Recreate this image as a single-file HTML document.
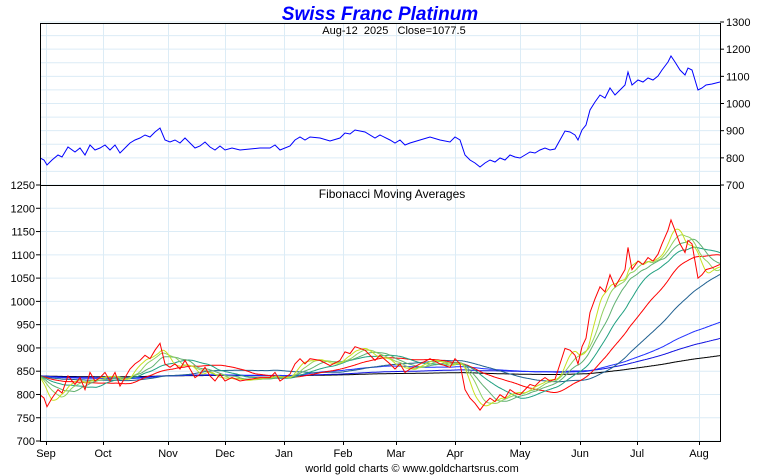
<!DOCTYPE html>
<html><head><meta charset="utf-8"><style>
html,body{margin:0;padding:0;background:#fff;width:760px;height:475px;overflow:hidden}
text{font-family:"Liberation Sans",sans-serif}
</style></head><body>
<svg id="s" width="760" height="475" xmlns="http://www.w3.org/2000/svg">
<defs>
<clipPath id="ct"><rect x="40" y="23" width="680" height="162"/></clipPath>
<clipPath id="cb"><rect x="40" y="185" width="680" height="257"/></clipPath>
</defs>
<g id="grid" stroke="#dcecf6" stroke-width="1"></g>
<g id="lines"></g>
<rect x="40.5" y="23.5" width="680" height="418" fill="none" stroke="#000"/>
<line x1="40" y1="185.5" x2="720" y2="185.5" stroke="#000"/>
<g id="labels" font-size="11" fill="#000"></g>
<text x="380" y="20" text-anchor="middle" font-size="19" font-weight="bold" font-style="italic" fill="#0000ff">Swiss Franc Platinum</text>
<text x="394" y="34" text-anchor="middle" font-size="11" style="white-space:pre" xml:space="preserve">Aug-12  2025   Close=1077.5</text>
<text x="392" y="198" text-anchor="middle" font-size="12">Fibonacci Moving Averages</text>
<text x="412" y="472" text-anchor="middle" font-size="11">world gold charts © www.goldchartsrus.com</text>
</svg>
<script>
var NS="http://www.w3.org/2000/svg";
function el(p,t,a,txt){var e=document.createElementNS(NS,t);for(var k in a)e.setAttribute(k,a[k]);if(txt)e.textContent=txt;p.appendChild(e);return e;}
var g=document.getElementById('grid'),L=document.getElementById('labels'),ln=document.getElementById('lines');
var months=[[46,'Sep'],[103,'Oct'],[168,'Nov'],[225,'Dec'],[284,'Jan'],[343,'Feb'],[396,'Mar'],[455,'Apr'],[520,'May'],[580,'Jun'],[637,'Jul'],[699,'Aug']];
months.forEach(function(m){el(g,'line',{x1:m[0]+.5,y1:23,x2:m[0]+.5,y2:441});el(L,'line',{x1:m[0]+.5,y1:441,x2:m[0]+.5,y2:445,stroke:'#000'});el(L,'text',{x:m[0],y:457,'text-anchor':'middle'},m[1]);});
for(var p=700;p<=1300;p+=50){var y=22+(1300-p)*0.2717;el(g,'line',{x1:40,y1:y,x2:720,y2:y});}
for(var p=700;p<=1300;p+=100){var y=22+(1300-p)*0.2717;el(L,'line',{x1:720,y1:y,x2:724,y2:y,stroke:'#000'});el(L,'text',{x:726,y:y+4},p);}
for(var p=700;p<=1250;p+=50){var y=185+(1250-p)*0.4655;el(g,'line',{x1:40,y1:y,x2:720,y2:y});el(L,'line',{x1:36,y1:y,x2:40,y2:y,stroke:'#000'});el(L,'text',{x:35,y:y+4,'text-anchor':'end'},p);}
var pts=[[40,158],[44,160],[47,165],[52,160],[58,155],[62,157],[68,147],[75,152],[80,148],[85,155],[90,145],[95,150],[100,148],[105,145],[110,150],[115,145],[120,153],[125,148],[130,143],[135,140],[140,138],[145,135],[150,137],[155,132],[160,128],[165,140],[170,142],[175,140],[180,143],[185,138],[190,143],[195,148],[200,146],[205,142],[210,147],[215,150],[220,146],[225,150],[232,148],[240,150],[250,149],[260,148],[270,148],[275,145],[280,150],[290,146],[295,140],[300,137],[305,140],[310,137],[320,138],[330,141],[340,138],[345,133],[350,134],[355,130],[365,132],[375,138],[380,135],[390,140],[395,143],[400,140],[405,145],[410,143],[420,140],[430,137],[440,140],[450,142],[455,137],[460,140],[465,155],[470,160],[475,163],[480,167],[485,163],[490,160],[495,162],[500,158],[505,160],[510,155],[515,157],[520,158],[525,155],[530,152],[535,153],[540,150],[545,148],[550,150],[555,149],[560,140],[565,131],[570,132],[575,135],[578,140],[582,130],[586,125],[590,110],[595,102],[600,95],[605,98],[610,88],[615,95],[620,90],[625,85],[628,72],[632,85],[638,80],[643,82],[648,78],[653,80],[658,76],[662,70],[665,66],[668,62],[671,56],[675,62],[680,70],[685,75],[688,68],[692,70],[695,80],[698,90],[702,88],[706,85],[712,84],[720,82]];
function str(a){return a.map(function(q){return q[0]+','+q[1].toFixed(1)}).join(' ');}
el(ln,'polyline',{points:str(pts),fill:'none',stroke:'#0000ff','stroke-width':1,'clip-path':'url(#ct)'});
var ser=[];for(var i=0;i<900;i++)ser.push(147);
for(var x=40;x<=720;x++){for(var j=0;j<pts.length-1;j++){if(x>=pts[j][0]&&x<=pts[j+1][0]){var t=(x-pts[j][0])/(pts[j+1][0]-pts[j][0]||1);ser.push(pts[j][1]+t*(pts[j+1][1]-pts[j][1]));break;}}}
var off=900;function by(y){return 1.7133*y+124;}
var mas=[[820,'#000000'],[440,'#1010e0'],[260,'#2030ff'],[150,'#206090'],[92,'#ff0000'],[57,'#20a080'],[35,'#60b070'],[22,'#90d060'],[13,'#c8e020']];
mas.forEach(function(m){var n=m[0],a=[];for(var x=40;x<=720;x++){var k=off+x-40,s=0;for(var q=k-n+1;q<=k;q++)s+=ser[q];a.push([x,by(s/n)]);}
el(ln,'polyline',{points:str(a),fill:'none',stroke:m[1],'stroke-width':1,'clip-path':'url(#cb)'});});
el(ln,'polyline',{points:str(pts.map(function(q){return[q[0],by(q[1])]})),fill:'none',stroke:'#ff0000','stroke-width':1,'clip-path':'url(#cb)'});
</script>
</body></html>
